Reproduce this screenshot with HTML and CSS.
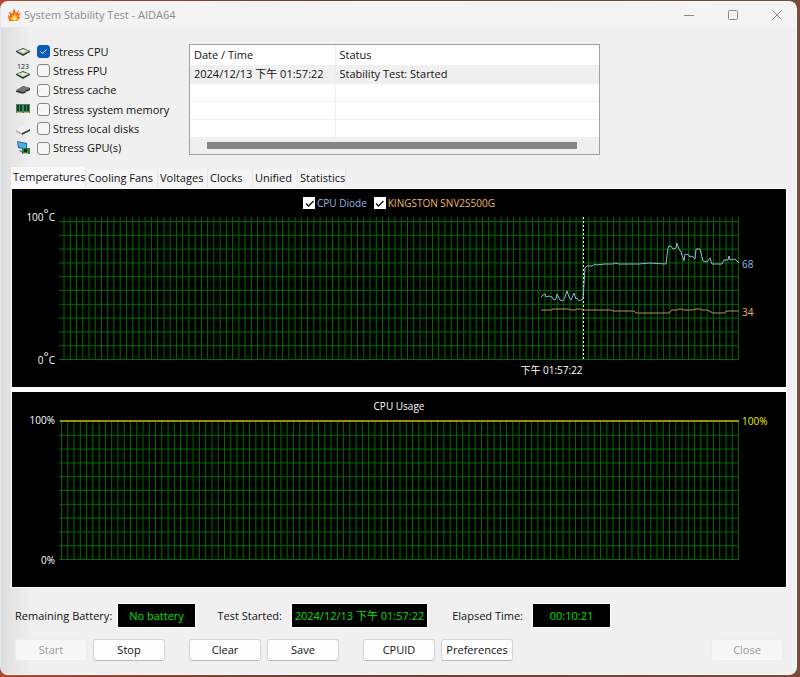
FILE: index.html
```html
<!DOCTYPE html>
<html lang="en">
<head>
  <meta charset="UTF-8">
  <title>System Stability Test - AIDA64</title>
  <link rel="stylesheet" href="styles.css">
</head>
<body>

<div class="window">
  <header class="titlebar">
    <svg class="logo" viewBox="0 0 14 14">
      <path fill="#f0691c" d="M1 13 0 7l2 1-1-5 3 3 2-6 2 5 3-3-1 4 3-1-2 3 1 2-3 3z"/>
      <path fill="#fdb92c" d="M3 12 2 9l2 1V6l2 2 1-4 1 4 2-1-1 3h2l-3 3z"/>
      <path fill="#ffed8a" d="m5 12 0-2 2-2 1 2-1 2z"/>
    </svg>
    <h1>System Stability Test - AIDA64</h1>
    <div class="window-buttons">
      <button aria-label="Minimize"><svg viewBox="0 0 10 10"><path d="M0 5.5h10"/></svg></button>
      <button aria-label="Maximize"><svg viewBox="0 0 10 10"><rect x=".5" y=".5" width="9" height="9" rx="1"/></svg></button>
      <button aria-label="Close window"><svg viewBox="0 0 10 10"><path d="M.5.5l9 9M9.5.5l-9 9"/></svg></button>
    </div>
  </header>

  <main>
    <section class="top">
      <div class="options">
        <label class="option">
          <svg viewBox="0 0 16 14"><path fill="#1f4a3a" d="m1 6 7-3 7 3v1l-7 4-7-4z"/><path fill="#d9d6b8" d="m2 6 6-2 6 2-6 3z"/><path fill="#fafaf4" d="m5 6 3-1 3 1-3 1z"/></svg>
          <input type="checkbox" checked><span>Stress CPU</span>
        </label>
        <label class="option">
          <svg viewBox="0 0 16 18"><text x="8" y="7" text-anchor="middle">123</text><path fill="#1f4a3a" d="m1 12 7-3 7 3v1l-7 4-7-4z"/><path fill="#d9d6b8" d="m2 12 6-2 6 2-6 3z"/><path fill="#fafaf4" d="m5 12 3-1 3 1-3 1z"/></svg>
          <input type="checkbox"><span>Stress FPU</span>
        </label>
        <label class="option">
          <svg viewBox="0 0 16 14"><path fill="#333" d="m1 8 7-5 7 2v2l-7 4-7-2z"/><path fill="#777" d="m1 7 7-4 7 2-7 4z"/><path stroke="#bbb" d="M3 9v2m2-1v1m3-1v1m3-3v1"/></svg>
          <input type="checkbox"><span>Stress cache</span>
        </label>
        <label class="option">
          <svg viewBox="0 0 16 14"><path fill="#3c8a5c" d="M1 1h14v9H1z"/><path fill="#26382e" d="M2 2h2v6H2zm3 0h2v6H5zm4 0h2v6H9zm3 0h2v6h-2z"/><path fill="#c6b860" d="M2 9h5v1H2zm7 0h5v1H9z"/></svg>
          <input type="checkbox"><span>Stress system memory</span>
        </label>
        <label class="option">
          <svg viewBox="0 0 16 14"><path fill="#f2f2f2" d="m1 8 7-4 7 3-7 4z"/><path fill="#b4b4b4" d="m1 8 6 3v2L1 10z"/><path fill="#3d3d3d" d="m7 11 8-4v2l-8 4z"/></svg>
          <input type="checkbox"><span>Stress local disks</span>
        </label>
        <label class="option">
          <svg viewBox="0 0 16 14"><path fill="#2c6c9e" d="m2 0 10 2v7L3 7z"/><path fill="#46b0e8" d="m3 1 8 2v5L4 6z"/><path fill="#888" d="m4 9 5 1v2l-4-1z"/><path fill="#2f7f4c" d="M7 7h8v6H7z"/><path fill="#1b2b22" d="M9 8h3v3H9z"/><path fill="#d4c05c" d="M8 12h5v1H8z"/></svg>
          <input type="checkbox"><span>Stress GPU(s)</span>
        </label>
      </div>

      <div class="log">
        <table>
          <thead>
            <tr><th>Date / Time</th><th>Status</th></tr>
          </thead>
          <tbody>
            <tr class="selected"><td>2024/12/13 下午 01:57:22</td><td>Stability Test: Started</td></tr>
            <tr><td></td><td></td></tr>
            <tr><td></td><td></td></tr>
            <tr><td></td><td></td></tr>
          </tbody>
        </table>
        <div class="scrollbar"><div class="thumb"></div></div>
      </div>
    </section>

    <div class="tabs" role="tablist">
      <button class="tab active" role="tab" aria-selected="true">Temperatures</button>
      <button class="tab" role="tab">Cooling Fans</button>
      <button class="tab" role="tab">Voltages</button>
      <button class="tab" role="tab">Clocks</button>
      <button class="tab" role="tab">Unified</button>
      <button class="tab" role="tab">Statistics</button>
    </div>

    <div class="graphs">
      <section class="graph">
        <div class="graph-head">
          <label class="series cpu"><input type="checkbox" checked>CPU Diode</label>
          <label class="series ssd"><input type="checkbox" checked>KINGSTON SNV2S500G</label>
        </div>
        <div class="scale">
          <span>100<span class="degree">°</span>C</span>
          <span>0<span class="degree">°</span>C</span>
        </div>
        <svg class="plot" id="tempPlot" viewBox="0 0 680 143" preserveAspectRatio="none"></svg>
        <div class="values" id="tempValues"></div>
        <div class="graph-foot"><span class="time">下午 01:57:22</span></div>
      </section>

      <section class="graph">
        <h2 class="graph-head">CPU Usage</h2>
        <div class="scale">
          <span>100%</span>
          <span>0%</span>
        </div>
        <svg class="plot" id="usagePlot" viewBox="0 0 680 140" preserveAspectRatio="none"></svg>
        <div class="values" id="usageValues"></div>
        <div class="graph-foot"></div>
      </section>
    </div>

    <div class="status">
      <label for="battery">Remaining Battery:</label>
      <output id="battery">No battery</output>
      <label for="started">Test Started:</label>
      <output id="started" class="wide">2024/12/13 下午 01:57:22</output>
      <label for="elapsed">Elapsed Time:</label>
      <output id="elapsed">00:10:21</output>
    </div>

    <div class="actions">
      <div class="group">
        <button disabled>Start</button>
        <button>Stop</button>
      </div>
      <div class="group">
        <button>Clear</button>
        <button>Save</button>
      </div>
      <div class="group">
        <button>CPUID</button>
        <button>Preferences</button>
      </div>
      <button class="close" disabled>Close</button>
    </div>
  </main>
</div>

<script>
const SVG_NS = "http://www.w3.org/2000/svg";

// x,y points inside the 680x143 temperature plot
const cpuTrace = "482,80 484,78 486,77 487,80 490,79 493,80 495,83 497,82 498,77 501,83 504,84 506,80 508,74 510,80 512,83 515,76 517,82 518,81 520,84 524,82 526,51 528,49 533,49 536,47 538,48 545,47 554,47 556,46 560,47 580,47 590,46 607,47 609,31 610,29 612,29 614,32 617,31 618,26 620,32 622,35 625,44 626,37 630,38 631,40 633,39 636,42 637,32 641,32 644,44 648,45 651,41 653,47 663,47 665,43 669,43 670,39 671,43 676,42 680,46";
const ssdTrace = "482,93 492,93 494,92 510,92 512,93 516,93 518,92 522,92 524,93 552,93 554,94 575,94 577,96 610,96 613,93 618,93 620,92 623,92 624,93 634,93 637,92 641,92 643,93 648,93 654,96 665,96 668,94 680,94";

function draw(svg, tag, attrs) {
  const el = document.createElementNS(SVG_NS, tag);
  for (const name in attrs) el.setAttribute(name, attrs[name]);
  svg.appendChild(el);
}

function drawGrid(svg, left, top, bottom) {
  let d = "";
  for (let i = 0; i <= 108; i++) {
    d += `M${left + i * (679.5 - left) / 108} 0V${bottom}`;
  }
  for (let i = 0; i <= 10; i++) {
    d += `M0 ${top + i * (bottom - top) / 10}H680`;
  }
  draw(svg, "path", { class: "grid", d });
}

function addValue(id, text, cls, y, height) {
  const el = document.createElement("span");
  el.className = cls;
  el.textContent = text;
  el.style.top = (y / height * 100) + "%";
  document.getElementById(id).appendChild(el);
}

const temp = document.getElementById("tempPlot");
drawGrid(temp, 5, 4.5, 142.5);
draw(temp, "path", { class: "marker", d: "M524.5 0V142" });
draw(temp, "polyline", { class: "trace ssd", points: ssdTrace });
draw(temp, "polyline", { class: "trace cpu", points: cpuTrace });
addValue("tempValues", "68", "cpu", 47, 143);
addValue("tempValues", "34", "ssd", 95, 143);

const usage = document.getElementById("usagePlot");
drawGrid(usage, 2.5, 1.5, 139.5);
draw(usage, "path", { class: "trace usage", d: "M1 1H680" });
addValue("usageValues", "100%", "usage", 1, 140);
</script>

</body>
</html>
```

FILE: styles.css
```css
* { box-sizing: border-box; }
body { margin: 0; padding: 1px 3px 2px 0; min-height: 100vh; display: flex; background: linear-gradient(to right, #b5482c, #6b3a30 40%, #7a4a3c); font: 11px/14px "Open Sans", "Noto Sans CJK TC", sans-serif; color: #111; }
button, input, output { font: inherit; color: inherit; }
button { padding: 0; }

.window { flex: 1; display: flex; flex-direction: column; border: 1px solid #fafafa; border-left-color: #dfe8ec; border-radius: 8px; background: linear-gradient(to right, #dedede, #f0f0f0 32px); overflow: hidden; }

.titlebar { display: flex; align-items: center; height: 25px; padding-left: 7px; background: #f3f3f3; color: #8c8c8c; }
.logo { width: 14px; height: 14px; margin-right: 2px; }
h1 { margin: 0; font-size: 11px; font-weight: normal; }
.window-buttons { display: flex; gap: 6px; margin-left: auto; }
.window-buttons button { width: 38px; height: 24px; border: 0; background: none; }
.window-buttons svg { display: block; width: 10px; height: 10px; margin: auto; fill: none; stroke: #8a8a8a; }

main { flex: 1; display: flex; flex-direction: column; padding: 15px 9px 12px 10px; }

.top { display: flex; gap: 12px; padding-left: 4px; }
.options { flex: none; display: grid; grid-auto-rows: 1fr; width: 162px; height: 116px; }
.option { display: flex; align-items: center; }
.option svg { flex: none; width: 16px; height: 18px; margin-right: 6px; }
.option text { font: 7px "Open Sans", sans-serif; fill: #222; }
.option span { margin-left: 3px; white-space: nowrap; }

input[type="checkbox"] { flex: none; appearance: none; width: 13px; height: 13px; margin: 0; border: 1px solid #858585; border-radius: 3px; background: #f6f6f6 center / 11px no-repeat; }
.option input:checked { border-color: #0b5cb8; background-color: #0b5cb8; background-image: url("data:image/svg+xml,%3Csvg xmlns='http://www.w3.org/2000/svg' viewBox='0 0 11 11'%3E%3Cpath d='M2.5 5.5l2 2 4-4' fill='none' stroke='white'/%3E%3C/svg%3E"); }

.log { flex: 0 1 411px; align-self: flex-start; margin-top: 2px; border: 1px solid #a0a0a4; background: #fff; }
.log table { width: 100%; border-collapse: collapse; table-layout: fixed; }
.log th, .log td { height: 18px; padding: 0 4px; border-bottom: 1px solid #f0f0f0; text-align: left; font-weight: normal; white-space: nowrap; }
.log th { height: 20px; border-bottom: 0; }
.log th:first-child { width: 145px; }
.log th:first-child, .log td:first-child { border-right: 1px solid #ececec; }
.log .selected { background: #f0f0f0; }
.scrollbar { height: 16px; padding: 4px 22px 5px 17px; background: #f0f0f0; }
.thumb { height: 7px; background: #858585; }

.tabs { display: grid; grid-template-columns: 75px 72px 50px 45px 45px 48px; align-items: end; height: 21px; margin-top: 9px; }
.tab { height: 19px; padding: 0 2px 2px; border: 0; border-right: 1px solid #e6e6e6; background: #f4f4f4; text-align: left; white-space: nowrap; }
.tab.active { height: 21px; background: #fafafa; }

.graphs { display: grid; gap: 5px; padding: 1px; background: #fff; }
.graph { display: grid; grid-template-columns: 47px 1fr 47px; grid-template-rows: 28px auto 27px; background: #000; color: #fff; }
.graph-head { grid-column: 1 / -1; display: flex; justify-content: center; align-items: center; gap: 7px; margin: 0; font-size: 10px; font-weight: normal; }
.series { display: flex; align-items: center; gap: 2px; }
.series input[type="checkbox"] { width: 12px; height: 12px; border: 0; border-radius: 0; background-color: #fff; }
.series input:checked { background-image: url("data:image/svg+xml,%3Csvg xmlns='http://www.w3.org/2000/svg' viewBox='0 0 11 11'%3E%3Cpath d='M2 5.5l2.5 2.5 5-5' fill='none' stroke='%23111' stroke-width='1.3'/%3E%3C/svg%3E"); }
.scale { display: flex; flex-direction: column; justify-content: space-between; margin: -7px 4px -7px 0; text-align: right; font-size: 10px; }
.degree { font-size: 12px; line-height: 0; vertical-align: 3px; }
.plot { display: block; width: 100%; height: 100%; min-height: 140px; fill: none; }
#tempPlot { min-height: 143px; }
.values { position: relative; font-size: 10px; }
.values span { position: absolute; left: 3px; transform: translateY(-50%); }
.graph-foot { grid-column: 2; }
.time { display: block; width: 77%; padding-top: 3px; text-align: right; font-size: 10px; }

.grid { stroke: #006c00; }
.marker { stroke: #fff; stroke-dasharray: 2 2; }
.trace { stroke-width: 1; }
.grid, .marker, .trace { vector-effect: non-scaling-stroke; }
.trace.cpu { stroke: #8fb4dc; }
.trace.ssd { stroke: #b8924a; }
.trace.usage { stroke: #a09000; stroke-width: 2; }
.series.cpu, .values .cpu { color: #93b9e4; }
.series.ssd, .values .ssd { color: #f0b95c; }
.values .usage { color: #f0f000; }

.status { display: flex; align-items: center; margin-top: 15px; padding-left: 4px; }
.status label { white-space: nowrap; text-align: right; width: 93px; }
.status output { width: 79px; height: 25px; margin-left: 9px; border: 1px solid #fff; background: #000; color: #00e000; text-align: center; line-height: 23px; white-space: nowrap; }
.status output.wide { width: 137px; }
.status output + label { width: 86px; }
.status .wide + label { width: 95px; }

.actions { display: flex; gap: 24px; margin-top: 11px; padding: 0 4px; }
.group { display: flex; gap: 6px; }
.actions button { width: 72px; height: 22px; border: 1px solid #d4d4d4; border-bottom-color: #bdbdbd; border-radius: 3px; background: #fdfdfd; }
.actions button:disabled { border-color: #ededed; background: #f7f7f7; color: #9a9a9a; }
.close { margin-left: auto; }
```
